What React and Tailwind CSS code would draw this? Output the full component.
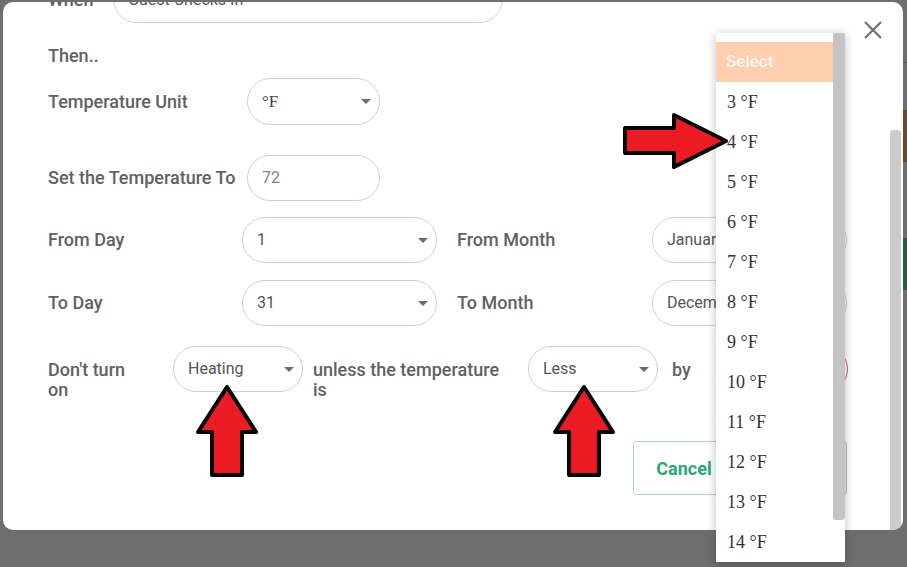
import clsx from 'clsx';

const label = 'text-[18px] font-medium text-[#616161] leading-5';
const font = { fontFamily: 'Roboto, "Liberation Sans", sans-serif' };

function Caret() {
  return (
    <svg width="10" height="5" viewBox="0 0 10 5" className="shrink-0">
      <path d="M0 0h10L5 5z" fill="#6b6b6b" />
    </svg>
  );
}

function Pill({ className, children, caret = true }) {
  return (
    <div
      className={clsx(
        'flex h-[46px] shrink-0 items-center justify-between rounded-full border bg-white pl-[14px] pr-[8px] text-[16px] text-[#555]',
        className
      )}
    >
      <span className="truncate">{children}</span>
      {caret && <Caret />}
    </div>
  );
}

function UpArrow({ className }) {
  return (
    <svg width="64" height="96" viewBox="0 0 64 96" className={className}>
      <path d="M31 3 L60 48 L46 48 L46 91 L16 91 L16 48 L2 48 Z" fill="#ed1c24" stroke="#000" strokeWidth="4" strokeLinejoin="round" />
    </svg>
  );
}

function RightArrow({ className }) {
  return (
    <svg width="108" height="60" viewBox="0 0 108 60" className={className}>
      <path d="M3 17 L52 17 L52 4 L104 30 L52 56 L52 42 L3 42 Z" fill="#ed1c24" stroke="#000" strokeWidth="4" strokeLinejoin="round" />
    </svg>
  );
}

const temps = [3, 4, 5, 6, 7, 8, 9, 10, 11, 12, 13, 14];

export default function App() {
  return (
    <div className="relative h-[567px] w-[907px] overflow-hidden bg-[#6e6e6e]" style={font}>
      {/* page behind the backdrop */}
      <div className="absolute right-0 top-[110px] h-[52px] w-[6px] bg-[#6b4a2c]" />
      <div className="absolute right-0 top-[238px] h-[52px] w-[6px] bg-[#2f5a3c]" />
      <div className="absolute right-0 top-[62px] h-px w-[6px] bg-[#555]" />

      {/* modal */}
      <div className="absolute left-[3px] top-[2px] h-[528px] w-[900px] overflow-hidden rounded-[10px] bg-white">
        <div className="-mt-[26px] flex flex-col pl-[45px]">
          <div className="flex h-[47px] items-center">
            <div className={clsx(label, 'w-[65px]')}>When</div>
            <div className="flex h-[47px] w-[390px] items-center rounded-full border border-[#cfcfcf] pl-[14px] text-[16px] text-[#555]">
              Guest Checks In
            </div>
          </div>

          <div className={clsx(label, 'h-[55px] pt-[23px]')}>Then..</div>

          <div className="flex h-[47px] items-center">
            <div className={clsx(label, 'w-[199px]')}>Temperature Unit</div>
            <Pill className="h-[47px] w-[133px] border-[#cfcfcf]">
              <span className="text-[17px] text-[#444]" style={{ fontFamily: '"Liberation Serif", serif' }}>°F</span>
            </Pill>
          </div>

          <div className="mt-[30px] flex h-[46px] items-center">
            <div className={clsx(label, 'w-[199px]')}>Set the Temperature To</div>
            <Pill caret={false} className="w-[133px] border-[#cfcfcf] text-[#808080]">72</Pill>
          </div>

          <div className="mt-[16px] flex h-[46px] items-center">
            <div className={clsx(label, 'w-[194px]')}>From Day</div>
            <Pill className="w-[195px] border-[#cfcfcf] pl-[13px] text-[#444]">1</Pill>
            <div className={clsx(label, 'ml-[20px] w-[195px]')}>From Month</div>
            <Pill className="w-[195px] border-[#cfcfcf] pl-[10px] text-[#444]">January</Pill>
          </div>

          <div className="mt-[17px] flex h-[46px] items-center">
            <div className={clsx(label, 'w-[194px]')}>To Day</div>
            <Pill className="w-[195px] border-[#cfcfcf] pl-[13px] text-[#444]">31</Pill>
            <div className={clsx(label, 'ml-[20px] w-[195px]')}>To Month</div>
            <Pill className="w-[195px] border-[#cfcfcf] pl-[10px] text-[#444]">December</Pill>
          </div>

          <div className="mt-[21px] flex h-[46px] items-start">
            <div className={clsx(label, 'mt-[13px] w-[125px] pr-[30px]')}>Don't turn on</div>
            <Pill className="-mt-px w-[130px] border-[#cfcfcf] pl-[13px] text-[#555]">Heating</Pill>
            <div className={clsx(label, 'ml-[10px] mt-[13px] w-[198px] pr-[2px]')}>unless the temperature is</div>
            <Pill className="ml-[17px] -mt-px w-[130px] border-[#cfcfcf] pl-[13px] text-[#555]">Less</Pill>
            <div className={clsx(label, 'ml-[14px] mt-[13px] w-[48px]')}>by</div>
            <Pill className="-mt-px w-[128px] border-[#e05555]">Select</Pill>
          </div>

          <div className="mt-[48px] flex w-[799px] justify-end gap-[10px]">
            <button className="h-[54px] w-[108px] rounded-[3px] border border-[#a9dcc4] bg-white pr-[6px] text-[18px] font-bold text-[#2aa872]">
              Cancel
            </button>
            <button className="h-[54px] w-[96px] rounded-[3px] border border-[#bdbdbd] bg-[#e6e6e6] text-[18px] font-bold text-[#999]">
              Save
            </button>
          </div>
        </div>

        {/* close */}
        <svg width="18" height="18" viewBox="0 0 18 18" className="absolute right-[21px] top-[19px]">
          <path d="M1 1L17 17M17 1L1 17" stroke="#6f6f6f" strokeWidth="2.2" />
        </svg>

        {/* modal scrollbar */}
        <div className="absolute right-[2px] top-[128px] h-[400px] w-[11px] rounded-t-[3px] bg-[#cbcbcb]" />
      </div>

      {/* open dropdown */}
      <div className="absolute left-[716px] top-[33px] h-[529px] w-[129px] overflow-hidden bg-white pt-[9px] shadow-[0_2px_10px_rgba(0,0,0,0.25)]">
        <div className="w-[117px]">
          <div className="flex h-[40px] items-center bg-[#fdcfae] pl-[10px] text-[17px] font-medium text-[#fff6ee]">Select</div>
          {temps.map((t) => (
            <div
              key={t}
              className="flex h-[40px] items-center pl-[11px] text-[18px] text-[#333]"
              style={{ fontFamily: '"Liberation Serif", serif' }}
            >
              {t} °F
            </div>
          ))}
        </div>
        <div className="absolute right-0 top-0 h-[487px] w-[12px] rounded-b-[3px] bg-[#c4c4c4]" />
      </div>

      {/* annotation arrows */}
      <RightArrow className="absolute left-[622px] top-[111px]" />
      <UpArrow className="absolute left-[196px] top-[384px]" />
      <UpArrow className="absolute left-[553px] top-[384px]" />
    </div>
  );
}
